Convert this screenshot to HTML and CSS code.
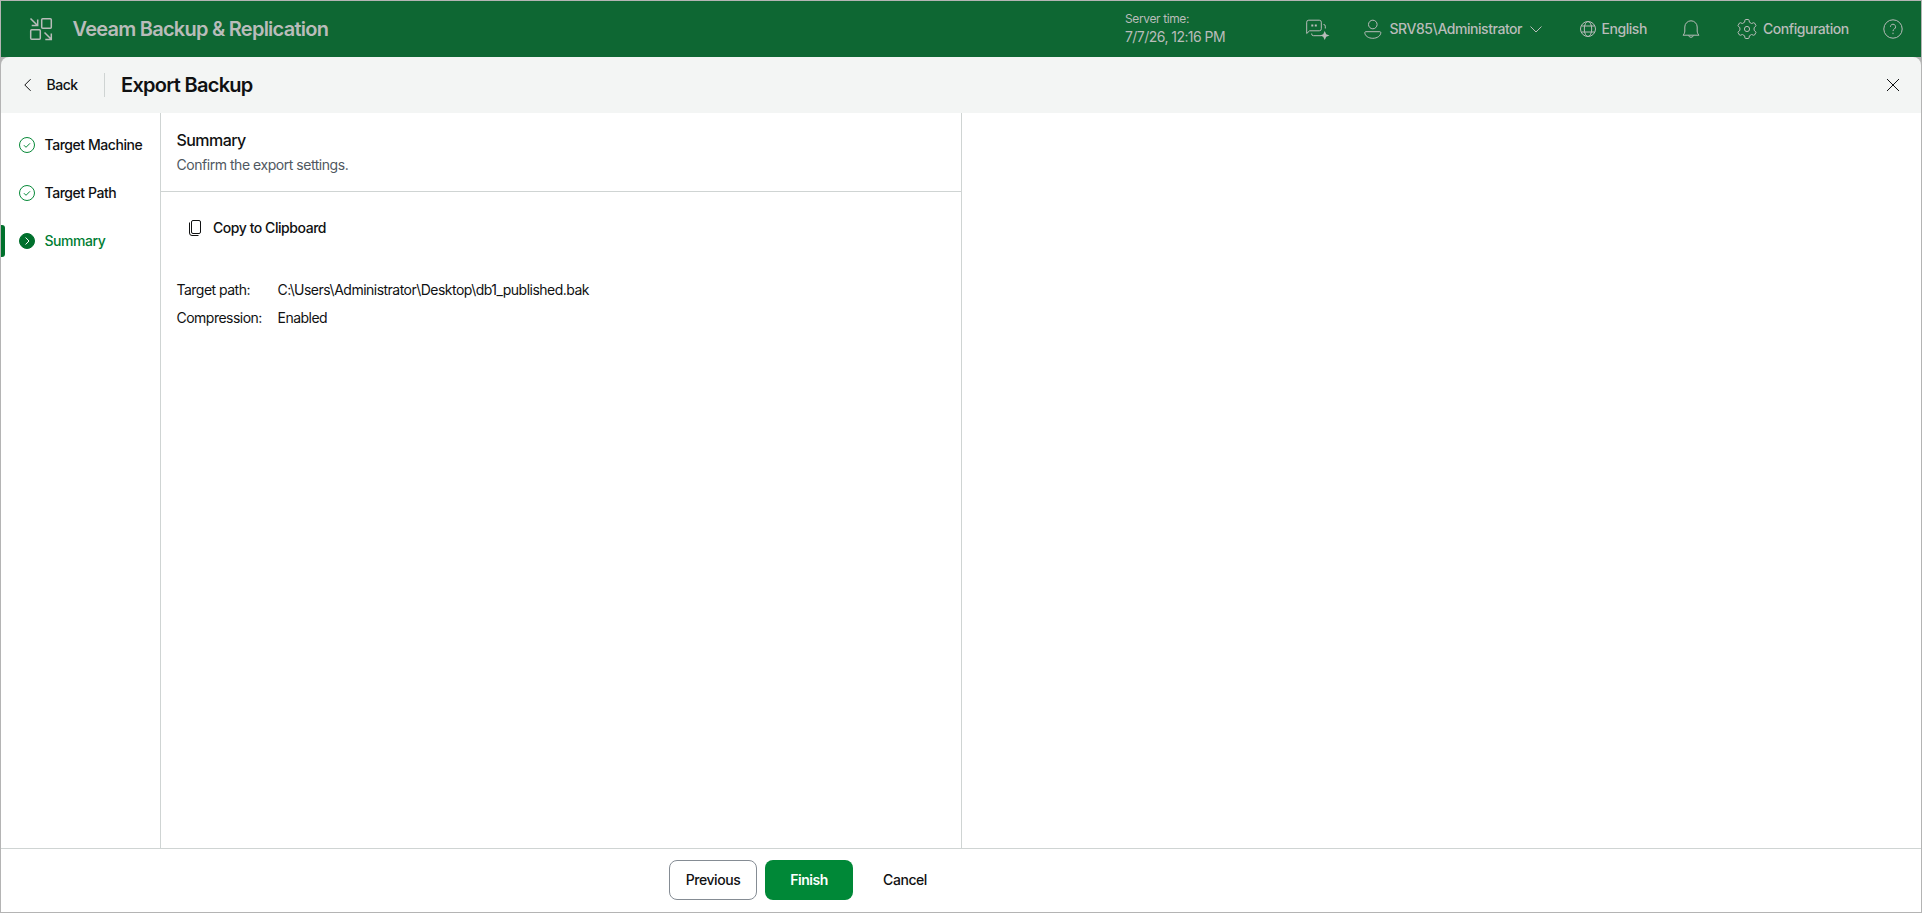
FILE: index.html
```html
<!DOCTYPE html>
<html lang="en">
<head>
  <meta charset="UTF-8" />
  <meta name="viewport" content="width=device-width, initial-scale=1.0"/>
  <title>Veeam Backup &amp; Replication - Export Backup</title>
  <link rel="stylesheet" href="styles.css">
</head>
<body>

<div class="app">
  <header class="topbar">
    <svg class="logo" width="24" height="24" viewBox="0 0 24 24">
      <rect x="12.7" y="1.7" width="9.6" height="9.6" rx="1"/>
      <rect x="1.7" y="12.7" width="9.6" height="9.6" rx="1"/>
      <path d="M1.500 1.500l7 7M8.700 2.500v6H2.700M15.500 15.500l6.500 6.500M22.300 16.500v6h-6"/>
    </svg>
    <h1 class="product">Veeam Backup &amp; Replication</h1>

    <div class="time">
      <div class="time-label">Server time:</div>
      <div class="time-value">7/7/26, 12:16 PM</div>
    </div>
    <div class="item chat">
      <svg width="26" height="24" viewBox="0 0 26 24">
        <path d="M2.700 16.500V5.200a2 2 0 0 1 2-2h10.600a2 2 0 0 1 2 2v6.600a2 2 0 0 1-2 2H5.600z"/>
        <path d="M7.700 16.500v.5a1.700 1.700 0 0 0 1.700 1.700h7.600M19.500 7.500a1.700 1.700 0 0 1 1.800 1.700v2.300"/>
        <path class="fill" d="M7.300 7.500h2v2h-2zM10.800 7.500h2v2h-2zM20.700 14l1.500 3.200 3.300 1.300-3.300 1.300-1.500 3.200-1.500-3.200-3.200-1.300 3.200-1.300z"/>
      </svg>
    </div>
    <div class="item user">
      <svg width="22" height="24" viewBox="0 0 22 24">
        <circle cx="10.800" cy="7.500" r="4.300"/>
        <path d="M3.700 14.700h14.200c.5 0 .9.400.9.900 0 3.200-3.600 5.700-8 5.700s-8-2.500-8-5.700c0-.5.400-.9.900-.9z"/>
      </svg>
      <span class="user-name">SRV85\Administrator</span>
      <svg class="chevron" width="14" height="14" viewBox="0 0 14 14"><path d="M1.500 4.500l5.500 5.500 5.500-5.500"/></svg>
    </div>
    <div class="item lang">
      <svg width="22" height="22" viewBox="0 0 22 22">
        <circle cx="12" cy="11" r="7.500"/>
        <ellipse cx="12" cy="11" rx="3.700" ry="7.500"/>
        <path d="M5.300 8h13.400M5.300 14h13.400"/>
      </svg>
      <span>English</span>
    </div>
    <div class="item bell">
      <svg width="24" height="24" viewBox="0 0 24 24">
        <path d="M4 18.200c1.300-1.500 1.800-2.500 1.800-4.200v-4a6.200 6.200 0 0 1 12.400 0v4c0 1.700.5 2.700 1.800 4.200z"/>
        <path d="M9.600 18.500a2.500 2.500 0 0 0 4.800 0"/>
      </svg>
    </div>
    <div class="item config">
      <svg width="24" height="24" viewBox="0 0 24 24">
        <path d="M10.600 2.500h2.800q.5 0 .6.500l.4 2.200 2.200 1.300 2.100-.8q.5-.2.800.3l1.400 2.400q.3.500-.1.800l-1.700 1.500v2.600l1.700 1.500q.4.300.1.800l-1.400 2.400q-.3.500-.8.300l-2.100-.8-2.200 1.300-.4 2.200q-.1.500-.6.500h-2.800q-.5 0-.6-.5l-.4-2.200-2.200-1.300-2.100.8q-.5.200-.8-.3l-1.400-2.400q-.3-.5.100-.8l1.700-1.500v-2.600L3.200 9.200q-.4-.3-.1-.8L4.500 6q.3-.5.800-.3l2.100.8 2.200-1.300.4-2.200q.1-.5.600-.5z"/>
        <circle cx="12" cy="12" r="2.600"/>
      </svg>
      <span>Configuration</span>
    </div>
    <div class="item help">
      <svg width="24" height="24" viewBox="0 0 24 24">
        <circle cx="12" cy="12" r="9.200"/>
        <path d="M9.400 9.800a2.600 2.600 0 1 1 4 2.200c-.9.600-1.400 1-1.400 2.100"/>
        <path d="M12 15.700v1.400"/>
      </svg>
    </div>
  </header>

  <div class="wizard-wrap">
    <div class="wizard-header">
      <button class="back">
        <svg width="10" height="14" viewBox="0 0 10 14"><path d="M7.600 1.200L1.800 7l5.800 5.800"/></svg>
        <span>Back</span>
      </button>
      <h2>Export Backup</h2>
      <svg class="close" width="14" height="14" viewBox="0 0 14 14"><path d="M1 1l12 12M13 1L1 13"/></svg>
    </div>
  </div>

  <main class="content">
    <nav class="steps">
      <div class="step">
        <svg width="18" height="18" viewBox="0 0 18 18"><circle cx="9" cy="9" r="7.500"/><path d="M5.900 9.200l2.100 2.100 4-4"/></svg>
        <span>Target Machine</span>
      </div>
      <div class="step">
        <svg width="18" height="18" viewBox="0 0 18 18"><circle cx="9" cy="9" r="7.500"/><path d="M5.900 9.200l2.100 2.100 4-4"/></svg>
        <span>Target Path</span>
      </div>
      <div class="step active">
        <svg width="18" height="18" viewBox="0 0 18 18"><circle cx="9" cy="9" r="7.500"/><path d="M7.600 5.500L11 9l-3.400 3.500"/></svg>
        <span>Summary</span>
      </div>
    </nav>

    <section class="panel">
      <div class="panel-head">
        <h3>Summary</h3>
        <p>Confirm the export settings.</p>
      </div>
      <button class="copy">
        <svg width="14" height="18" viewBox="0 0 14 18">
          <rect x="2.500" y="1.500" width="9" height="13" rx="1.500"/>
          <path d="M.5 3.500v10.500a2.500 2.500 0 0 0 2.500 2.500h6.500"/>
        </svg>
        <span>Copy to Clipboard</span>
      </button>
      <dl class="summary">
        <dt>Target path:</dt>
        <dd class="path">C:\Users\Administrator\Desktop\db1_published.bak</dd>
        <dt>Compression:</dt>
        <dd>Enabled</dd>
      </dl>
    </section>
  </main>

  <footer class="footer">
    <button class="btn">Previous</button>
    <button class="btn primary">Finish</button>
    <button class="btn plain">Cancel</button>
  </footer>
</div>

</body>
</html>
```

FILE: styles.css
```css
* { box-sizing: border-box; }
body {
  margin: 0;
  font-family: Inter, "Liberation Sans", sans-serif;
  font-size: 14px;
  line-height: 20px;
  letter-spacing: -0.45px;
  color: #101112;
}
h1, h2, h3, p, dl, dd { margin: 0; }
button {
  padding: 0;
  border: 0;
  background: none;
  font: inherit;
  font-weight: 500;
  letter-spacing: inherit;
  color: inherit;
}
svg { display: block; flex: none; fill: none; stroke: currentColor; }

.app {
  display: flex;
  flex-direction: column;
  height: 100vh;
  border: 1px solid #b4b4b4;
  background: #fff;
}

/* top bar */
.topbar {
  display: flex;
  align-items: center;
  flex: none;
  height: 56px;
  background: #0e6733;
  color: #b9bcba;
}
.logo { margin-left: 28px; stroke-width: 1.5; }
.product {
  margin-left: 19.5px;
  font-size: 20px;
  font-weight: 600;
  letter-spacing: -0.75px;
}
.time { width: 179px; margin-left: auto; }
.time-label { font-size: 12px; line-height: 16px; letter-spacing: -0.38px; }
.time-value { letter-spacing: -0.55px; }
.item { display: flex; align-items: center; height: 24px; font-weight: 500; }
.chat { width: 58px; }
.chat .fill { fill: currentColor; stroke: none; }
.user { width: 214px; }
.user span { margin-left: 5.5px; }
.user .chevron { margin-left: auto; margin-right: 33px; }
.lang { width: 103px; }
.lang span { margin-left: 3.5px; }
.bell { width: 56px; }
.config { width: 146px; }
.config span { margin-left: 4px; }
.help { width: 40px; }

/* wizard */
.wizard-wrap { flex: none; background: #b4b4b4; }
.wizard-header {
  display: flex;
  align-items: center;
  height: 56px;
  border-radius: 8px 8px 0 0;
  background: #f3f5f4;
}
.back {
  display: flex;
  align-items: center;
  width: 104px;
  height: 24px;
  padding-left: 22px;
  border-right: 1px solid #cfd4d3;
}
.back span { margin-left: 13.5px; }
.wizard-header h2 {
  margin-left: 16px;
  font-size: 20px;
  font-weight: 600;
  letter-spacing: -0.72px;
}
.close { margin-left: auto; margin-right: 21px; }

.content { display: flex; flex: 1; }
.steps { width: 160px; padding-top: 16px; border-right: 1px solid #cfd4d3; }
.step {
  display: flex;
  align-items: center;
  height: 32px;
  margin-bottom: 16px;
  padding-left: 17px;
  font-weight: 500;
}
.step svg { color: #078938; }
.step span { margin-left: 8.5px; white-space: nowrap; }
.step.active { padding-left: 0; color: #007d32; }
.step.active::before {
  content: "";
  width: 4px;
  height: 32px;
  margin-right: 13px;
  border-radius: 0 3px 3px 0;
  background: #00702c;
}
.step.active svg { color: #00702c; }
.step.active circle { fill: #00702c; }
.step.active path { stroke: #fff; }

.panel { width: 801px; border-right: 1px solid #cfd4d3; }
.panel-head {
  height: 79px;
  padding: 15px 16px 0 15.5px;
  border-bottom: 1px solid #cfd4d3;
}
.panel-head h3 { font-size: 16px; line-height: 24px; font-weight: 500; letter-spacing: -0.55px; }
.panel-head p { margin-top: 3px; letter-spacing: -0.46px; color: #505861; }
.copy { display: flex; align-items: center; height: 32px; margin: 20px 0 0 28px; }
.copy span { margin-left: 10px; }
.summary {
  display: grid;
  grid-template-columns: 101px auto;
  row-gap: 8px;
  margin: 36px 0 0 15.5px;
  letter-spacing: -0.52px;
}

.footer {
  display: flex;
  flex: none;
  height: 64px;
  padding: 11px 0 0 668px;
  border-top: 1px solid #cfd4d3;
}
.btn { width: 88px; height: 40px; margin-right: 8px; border-radius: 8px; }
.btn:first-child { border: 1px solid #858c94; }
.btn.primary { background: #008837; color: #fff; font-weight: 600; }
```
